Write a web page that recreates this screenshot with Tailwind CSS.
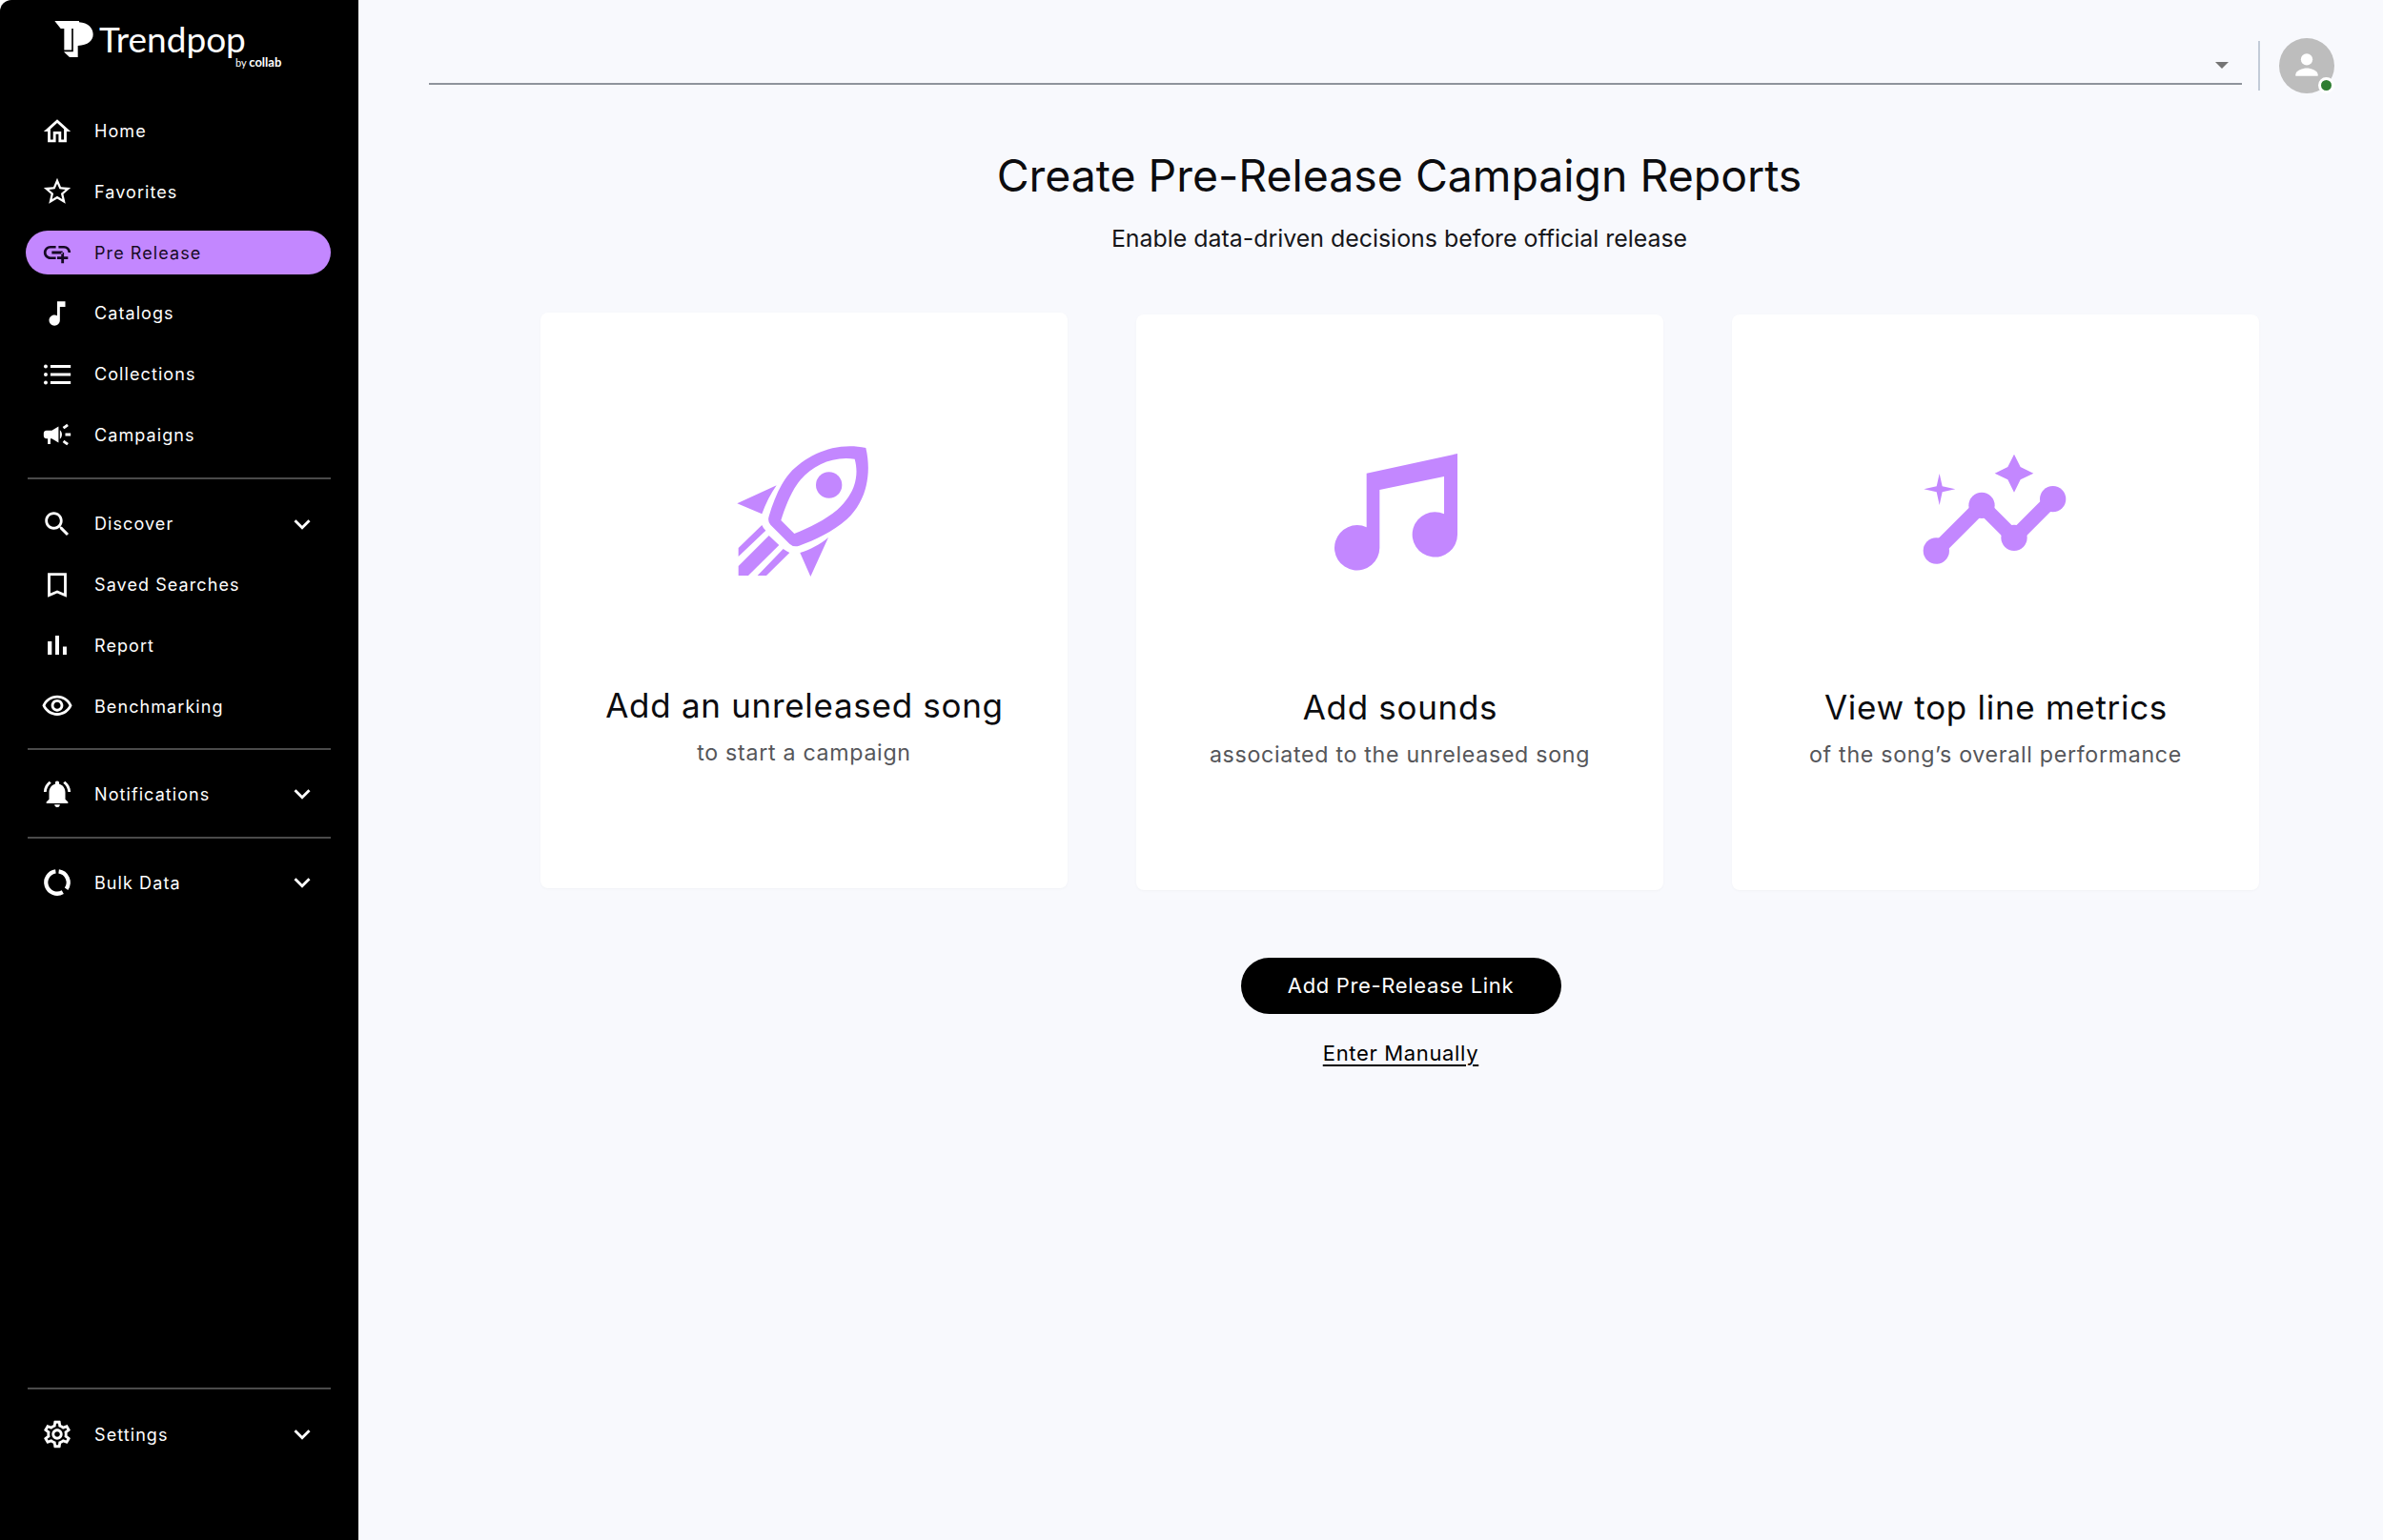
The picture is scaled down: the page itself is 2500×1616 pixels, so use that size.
<!DOCTYPE html>
<html lang="en">
<head>
  <meta charset="UTF-8">
  <title>Trendpop</title>
  <script src="https://cdn.jsdelivr.net/npm/@tailwindcss/browser@4"></script>
</head>
<body class="bg-white font-['Inter',sans-serif]">
  <div class="flex h-[1616px] w-[2500px] overflow-hidden">

    <!-- Sidebar -->
    <aside class="w-[376px] h-full shrink-0 bg-black rounded-tl-xl flex flex-col text-white text-[18px] tracking-[0.06em]">
      <!-- Logo -->
      <div class="relative h-[114.5px] shrink-0">
        <svg class="absolute left-[39px] top-[10px]" width="90" height="60" viewBox="0 0 270 180" fill="#fff">
          <path d="M55 36H132V40C160 42 176 58 176 78C176 98 160 112 128 114V150H102L85 134V60H74Z"/>
          <path d="M111 60V130H80" stroke="#000" stroke-width="5" fill="none"/>
        </svg>
        <span class="absolute left-[104px] top-[18px] font-['Lato',sans-serif] font-normal text-[37px] leading-[46px] tracking-normal">Trendpop</span>
        <span class="absolute left-[247px] top-[56px] font-['Lato',sans-serif] text-[11px] leading-[18px] tracking-normal">by <b class="text-[13px]">collab</b></span>
      </div>

      <nav class="pl-[27px] pr-[29px] flex flex-col gap-[17.75px]">
        <a class="h-[46px] flex items-center pl-[16px]">
          <svg class="w-[34px] h-[34px] mr-[22px] shrink-0" viewBox="0 0 24 24" fill="currentColor"><path d="M12 5.69l5 4.5V18h-2v-6H9v6H7v-7.81l5-4.5M12 3L2 12h3v8h6v-6h2v6h6v-8h3L12 3z"/></svg>Home
        </a>
        <a class="h-[46px] flex items-center pl-[16px]">
          <svg class="w-[34px] h-[34px] mr-[22px] shrink-0" viewBox="0 0 24 24" fill="currentColor"><path d="M22 9.24l-7.19-.62L12 2 9.19 8.63 2 9.24l5.46 4.73L5.82 21 12 17.27 18.18 21l-1.63-7.03L22 9.24zM12 15.4l-3.76 2.27 1-4.28-3.32-2.88 4.38-.38L12 6.1l1.71 4.04 4.38.38-3.32 2.88 1 4.28L12 15.4z"/></svg>Favorites
        </a>
        <a class="h-[46px] flex items-center pl-[16px] rounded-full bg-[#c387ff] text-[#160a24]">
          <svg class="w-[34px] h-[34px] mr-[22px] shrink-0" viewBox="0 0 24 24" fill="currentColor"><path d="M8 11h8v2H8zm12.1 1H22c0-2.76-2.24-5-5-5h-4v1.9h4c1.71 0 3.1 1.39 3.1 3.1zM3.9 12c0-1.71 1.39-3.1 3.1-3.1h4V7H7c-2.76 0-5 2.24-5 5s2.24 5 5 5h4v-1.9H7c-1.71 0-3.1-1.39-3.1-3.1zM17 12h-2v3h-3v2h3v3h2v-3h3v-2h-3z"/></svg>Pre Release
        </a>
        <a class="h-[46px] flex items-center pl-[16px]">
          <svg class="w-[34px] h-[34px] mr-[22px] shrink-0" viewBox="0 0 24 24" fill="currentColor"><path d="M12 3v10.55c-.59-.34-1.27-.55-2-.55-2.21 0-4 1.79-4 4s1.79 4 4 4 4-1.79 4-4V7h4V3h-6z"/></svg>Catalogs
        </a>
        <a class="h-[46px] flex items-center pl-[16px]">
          <svg class="w-[34px] h-[34px] mr-[22px] shrink-0" viewBox="0 0 24 24" fill="currentColor"><circle cx="3.5" cy="6" r="1.4"/><circle cx="3.5" cy="12" r="1.4"/><circle cx="3.5" cy="18" r="1.4"/><path d="M7 5h15v2H7zM7 11h15v2H7zM7 17h15v2H7z"/></svg>Collections
        </a>
        <a class="h-[46px] flex items-center pl-[16px]">
          <svg class="w-[34px] h-[34px] mr-[22px] shrink-0" viewBox="0 0 24 24" fill="currentColor"><path d="M18 11v2h4v-2h-4zm-2 6.61c.96.71 2.21 1.65 3.2 2.39.4-.53.8-1.07 1.2-1.6-.99-.74-2.24-1.68-3.2-2.4-.4.54-.8 1.08-1.2 1.61zM20.4 5.6c-.4-.53-.8-1.07-1.2-1.6-.99.74-2.24 1.68-3.2 2.4.4.53.8 1.07 1.2 1.6.96-.72 2.21-1.65 3.2-2.4zM4 9c-1.1 0-2 .9-2 2v2c0 1.1.9 2 2 2h1v4h2v-4h1l5 3V6L8 9H4zm11.5 3c0-1.33-.58-2.53-1.5-3.35v6.69c.92-.81 1.5-2.01 1.5-3.34z"/></svg>Campaigns
        </a>
      </nav>

      <div class="mx-[29px] w-[318px] h-[2px] mt-[21.5px] bg-[#4a4a4a] shrink-0"></div>

      <nav class="pl-[27px] pr-[29px] mt-[24px] flex flex-col gap-[17.75px]">
        <a class="h-[46px] flex items-center pl-[16px]">
          <svg class="w-[34px] h-[34px] mr-[22px] shrink-0" viewBox="0 0 24 24" fill="currentColor"><path d="M15.5 14h-.79l-.28-.27C15.41 12.59 16 11.11 16 9.5 16 5.91 13.09 3 9.5 3S3 5.91 3 9.5 5.91 16 9.5 16c1.61 0 3.09-.59 4.23-1.57l.27.28v.79l5 4.99L20.49 19l-4.99-5zm-6 0C7.01 14 5 11.99 5 9.5S7.01 5 9.5 5 14 7.01 14 9.5 11.99 14 9.5 14z"/></svg>Discover
          <svg class="w-[34px] h-[34px] ml-auto mr-[13px] shrink-0" viewBox="0 0 24 24" fill="currentColor"><path d="M7.41 8.59L12 13.17l4.59-4.58L18 10l-6 6-6-6 1.41-1.41z"/></svg>
        </a>
        <a class="h-[46px] flex items-center pl-[16px]">
          <svg class="w-[34px] h-[34px] mr-[22px] shrink-0" viewBox="0 0 24 24" fill="currentColor"><path d="M5 3h14v18l-7-3-7 3V3zm2 2v13l5-2.18L17 18V5H7z"/></svg>Saved Searches
        </a>
        <a class="h-[46px] flex items-center pl-[16px]">
          <svg class="w-[34px] h-[34px] mr-[22px] shrink-0" viewBox="0 0 24 24" fill="currentColor"><path d="M5 9.2h3V19H5zM10.6 5h2.8v14h-2.8zm5.6 8H19v6h-2.8z"/></svg>Report
        </a>
        <a class="h-[46px] flex items-center pl-[16px]">
          <svg class="w-[34px] h-[34px] mr-[22px] shrink-0" viewBox="0 0 24 24" fill="currentColor"><path d="M12 6c3.79 0 7.17 2.13 8.82 5.5C19.17 14.87 15.79 17 12 17s-7.17-2.13-8.82-5.5C4.83 8.13 8.21 6 12 6m0-2C7 4 2.73 7.11 1 11.5 2.73 15.89 7 19 12 19s9.27-3.11 11-7.5C21.27 7.11 17 4 12 4zm0 5c1.38 0 2.5 1.12 2.5 2.5S13.38 14 12 14s-2.5-1.12-2.5-2.5S10.62 9 12 9m0-2c-2.48 0-4.5 2.02-4.5 4.5S9.52 16 12 16s4.5-2.02 4.5-4.5S14.48 7 12 7z"/></svg>Benchmarking
        </a>
      </nav>

      <div class="mx-[29px] w-[318px] h-[2px] mt-[21px] bg-[#4a4a4a] shrink-0"></div>

      <nav class="pl-[27px] pr-[29px] mt-[23px]">
        <a class="h-[46px] flex items-center pl-[16px]">
          <svg class="w-[34px] h-[34px] mr-[22px] shrink-0" viewBox="0 0 24 24" fill="currentColor"><path d="M7.58 4.08L6.15 2.65C3.75 4.48 2.17 7.3 2.03 10.5h2c.15-2.65 1.51-4.97 3.55-6.42zm12.39 6.42h2c-.15-3.2-1.73-6.02-4.12-7.85l-1.42 1.43c2.02 1.45 3.39 3.77 3.54 6.42zM18 11c0-3.07-1.64-5.64-4.5-6.32V4c0-.83-.67-1.5-1.5-1.5s-1.5.67-1.5 1.5v.68C7.63 5.36 6 7.92 6 11v5l-2 2v1h16v-1l-2-2v-5zm-6 11c.14 0 .27-.01.4-.04.65-.14 1.18-.58 1.44-1.18.1-.24.15-.5.15-.78h-4c.01 1.1.9 2 2.01 2z"/></svg>Notifications
          <svg class="w-[34px] h-[34px] ml-auto mr-[13px] shrink-0" viewBox="0 0 24 24" fill="currentColor"><path d="M7.41 8.59L12 13.17l4.59-4.58L18 10l-6 6-6-6 1.41-1.41z"/></svg>
        </a>
      </nav>

      <div class="mx-[29px] w-[318px] h-[2px] mt-[22px] bg-[#4a4a4a] shrink-0"></div>

      <nav class="pl-[27px] pr-[29px] mt-[23px]">
        <a class="h-[46px] flex items-center pl-[16px]">
          <svg class="w-[34px] h-[34px] mr-[22px] shrink-0" viewBox="0 0 24 24" fill="none" stroke="currentColor" stroke-width="3"><path d="M10.85 3.83A8.25 8.25 0 1 0 16.1 19.14"/><path d="M13.15 3.83A8.25 8.25 0 0 1 18.76 16.73"/></svg>Bulk Data
          <svg class="w-[34px] h-[34px] ml-auto mr-[13px] shrink-0" viewBox="0 0 24 24" fill="currentColor"><path d="M7.41 8.59L12 13.17l4.59-4.58L18 10l-6 6-6-6 1.41-1.41z"/></svg>
        </a>
      </nav>

      <div class="mt-auto mx-[29px] w-[318px] h-[2px] bg-[#4a4a4a] shrink-0"></div>

      <nav class="pl-[27px] pr-[29px] mt-[24px] mb-[88px]">
        <a class="h-[46px] flex items-center pl-[16px]">
          <svg class="w-[34px] h-[34px] mr-[22px] shrink-0" viewBox="0 0 24 24" fill="currentColor"><path d="M19.43 12.98c.04-.32.07-.64.07-.98 0-.34-.03-.66-.07-.98l2.11-1.65c.19-.15.24-.42.12-.64l-2-3.46c-.09-.16-.26-.25-.44-.25-.06 0-.12.01-.17.03l-2.49 1c-.52-.4-1.08-.73-1.69-.98l-.38-2.65C14.46 2.18 14.25 2 14 2h-4c-.25 0-.46.18-.49.42l-.38 2.65c-.61.25-1.17.59-1.69.98l-2.49-1c-.06-.02-.12-.03-.18-.03-.17 0-.34.09-.43.25l-2 3.46c-.13.22-.07.49.12.64l2.11 1.65c-.04.32-.07.65-.07.98 0 .33.03.66.07.98l-2.11 1.65c-.19.15-.24.42-.12.64l2 3.46c.09.16.26.25.44.25.06 0 .12-.01.17-.03l2.49-1c.52.4 1.08.73 1.69.98l.38 2.65c.03.24.24.42.49.42h4c.25 0 .46-.18.49-.42l.38-2.65c.61-.25 1.17-.59 1.69-.98l2.49 1c.06.02.12.03.18.03.17 0 .34-.09.43-.25l2-3.46c.12-.22.07-.49-.12-.64l-2.11-1.65zm-1.98-1.71c.04.31.05.52.05.73 0 .21-.02.43-.05.73l-.14 1.13.89.7 1.08.84-.7 1.21-1.27-.51-1.04-.42-.9.68c-.43.32-.84.56-1.25.73l-1.06.43-.16 1.13-.2 1.35h-1.4l-.19-1.35-.16-1.13-1.06-.43c-.43-.18-.83-.41-1.23-.71l-.91-.7-1.06.43-1.27.51-.7-1.21 1.08-.84.89-.7-.14-1.13c-.03-.31-.05-.54-.05-.74s.02-.43.05-.73l.14-1.13-.89-.7-1.08-.84.7-1.21 1.27.51 1.04.42.9-.68c.43-.32.84-.56 1.25-.73l1.06-.43.16-1.13.2-1.35h1.39l.19 1.35.16 1.13 1.06.43c.43.18.83.41 1.23.71l.91.7 1.06-.43 1.27-.51.7 1.21-1.07.85-.89.7.14 1.13zM12 8c-2.21 0-4 1.79-4 4s1.79 4 4 4 4-1.79 4-4-1.79-4-4-4zm0 6c-1.1 0-2-.9-2-2s.9-2 2-2 2 .9 2 2-.9 2-2 2z"/></svg>Settings
          <svg class="w-[34px] h-[34px] ml-auto mr-[13px] shrink-0" viewBox="0 0 24 24" fill="currentColor"><path d="M7.41 8.59L12 13.17l4.59-4.58L18 10l-6 6-6-6 1.41-1.41z"/></svg>
        </a>
      </nav>
    </aside>

    <!-- Main -->
    <main class="flex-1 bg-[#f8f9fd] pl-[74px] pr-[14px] flex flex-col">
      <!-- Top bar -->
      <div class="flex items-start pt-[40px] h-[96px] shrink-0">
        <div class="w-[1902px] h-[49px] border-b-2 border-[#8f949c] flex items-center justify-end pr-[14px] pt-[10px]">
          <div class="w-0 h-0 border-x-[7px] border-x-transparent border-t-[7px] border-t-[#757575]"></div>
        </div>
        <div class="w-[2px] h-[52px] ml-[17px] mt-[3px] bg-[#c3ccd8]"></div>
        <div class="relative w-[58px] h-[58px] ml-[20px] rounded-full bg-[#bdbdbd] flex items-center justify-center">
          <svg class="w-[40px] h-[40px]" viewBox="0 0 24 24" fill="#fff"><circle cx="12" cy="8" r="3.7"/><path d="M5 18.5v-1c0-2.6 4.6-4 7-4s7 1.4 7 4v1z"/></svg>
          <span class="absolute right-0 bottom-0 w-[11px] h-[11px] rounded-full bg-[#2e7d32] border-[3px] border-white box-content"></span>
        </div>
      </div>

      <h1 class="mt-[60px] text-center text-[46.4px] leading-[56px] text-[#0c0c0f]">Create Pre-Release Campaign Reports</h1>
      <p class="mt-[20px] text-center text-[24.9px] leading-[36px] text-[#16161a]">Enable data-driven decisions before official release</p>

      <!-- Cards -->
      <div class="mt-[60px] mx-auto w-[1803px] grid grid-cols-3 gap-[72px] items-start">
        <div class="h-[604px] bg-white rounded-lg shadow-[0_1px_3px_rgba(0,0,0,0.03)] text-center">
          <div class="h-[390px] pt-[112px] flex justify-center">
            <svg class="-ml-[7px]" width="200" height="180" viewBox="0 0 600 540" fill="#c387ff">
              <path fill-rule="evenodd" d="M505 90C410 70 320 110 265 170C235 205 215 255 200 305Q195 320 205 332L265 392Q278 404 295 398C345 380 400 355 445 315C505 260 525 175 505 90ZM470 125C400 115 340 145 300 190C270 225 252 275 238 318L280 360C330 340 375 318 415 285C470 235 485 180 470 125Z"/>
              <circle cx="389" cy="207" r="41"/>
              <path d="M100 265L224 208C205 235 190 265 178 298Z"/>
              <path d="M387 372C360 395 330 410 298 420L331 495Z"/>
              <path d="M178 333Q182 343 190 350L104 432V405Z"/>
              <path d="M200 366L232 396L135 492H104V462Z"/>
              <path d="M245 408Q255 415 265 420L192 492H164Z"/>
            </svg>
          </div>
          <h2 class="pl-[2px] text-[35px] leading-[44px] tracking-[0.02em] text-[#0c0c0f]">Add an unreleased song</h2>
          <p class="mt-[12px] pl-[1px] text-[23.2px] leading-[32px] tracking-[0.03em] text-[#55565a]">to start a campaign</p>
        </div>
        <div class="h-[604px] mt-[2px] bg-white rounded-lg shadow-[0_1px_3px_rgba(0,0,0,0.03)] text-center">
          <div class="h-[390px] pt-[120px] flex justify-center">
            <svg class="ml-[3px]" width="200" height="170" viewBox="0 0 600 510" fill="#c387ff">
              <path d="M191 140L477 78V333A71 71 0 1 1 435 268V150L232 192V375A71 71 0 1 1 191 310Z"/>
            </svg>
          </div>
          <h2 class="pl-[2px] text-[35px] leading-[44px] tracking-[0.02em] text-[#0c0c0f]">Add sounds</h2>
          <p class="mt-[12px] pl-[1px] text-[23.2px] leading-[32px] tracking-[0.03em] text-[#55565a]">associated to the unreleased song</p>
        </div>
        <div class="h-[604px] mt-[2px] bg-white rounded-lg shadow-[0_1px_3px_rgba(0,0,0,0.03)] text-center">
          <div class="h-[390px] pt-[120px] flex justify-center">
            <svg class="-ml-[7px]" width="200" height="170" viewBox="0 0 600 510" fill="#c387ff">
              <path d="M124 384L267 241L369 343L491 221" fill="none" stroke="#c387ff" stroke-width="46"/>
              <circle cx="124" cy="384" r="41"/><circle cx="267" cy="241" r="41"/><circle cx="369" cy="343" r="41"/><circle cx="491" cy="221" r="41"/>
              <path d="M369 80L389 120L430 140L389 160L369 200L349 160L308 140L349 120Z"/>
              <path d="M134 141L143 181L184 190L143 199L134 240L125 199L85 190L125 181Z"/>
            </svg>
          </div>
          <h2 class="pl-[2px] text-[35px] leading-[44px] tracking-[0.02em] text-[#0c0c0f]">View top line metrics</h2>
          <p class="mt-[12px] pl-[1px] text-[23.2px] leading-[32px] tracking-[0.03em] text-[#55565a]">of the song’s overall performance</p>
        </div>
      </div>

      <!-- Actions -->
      <div class="mt-[71px] pl-[3px] flex flex-col items-center">
        <button class="w-[336px] h-[59px] rounded-full bg-black text-white text-[22px] tracking-[0.03em]">Add Pre-Release Link</button>
        <a class="mt-[25px] text-[22px] leading-[32px] tracking-[0.03em] text-black underline underline-offset-4">Enter Manually</a>
      </div>
    </main>
  </div>
</body>
</html>
